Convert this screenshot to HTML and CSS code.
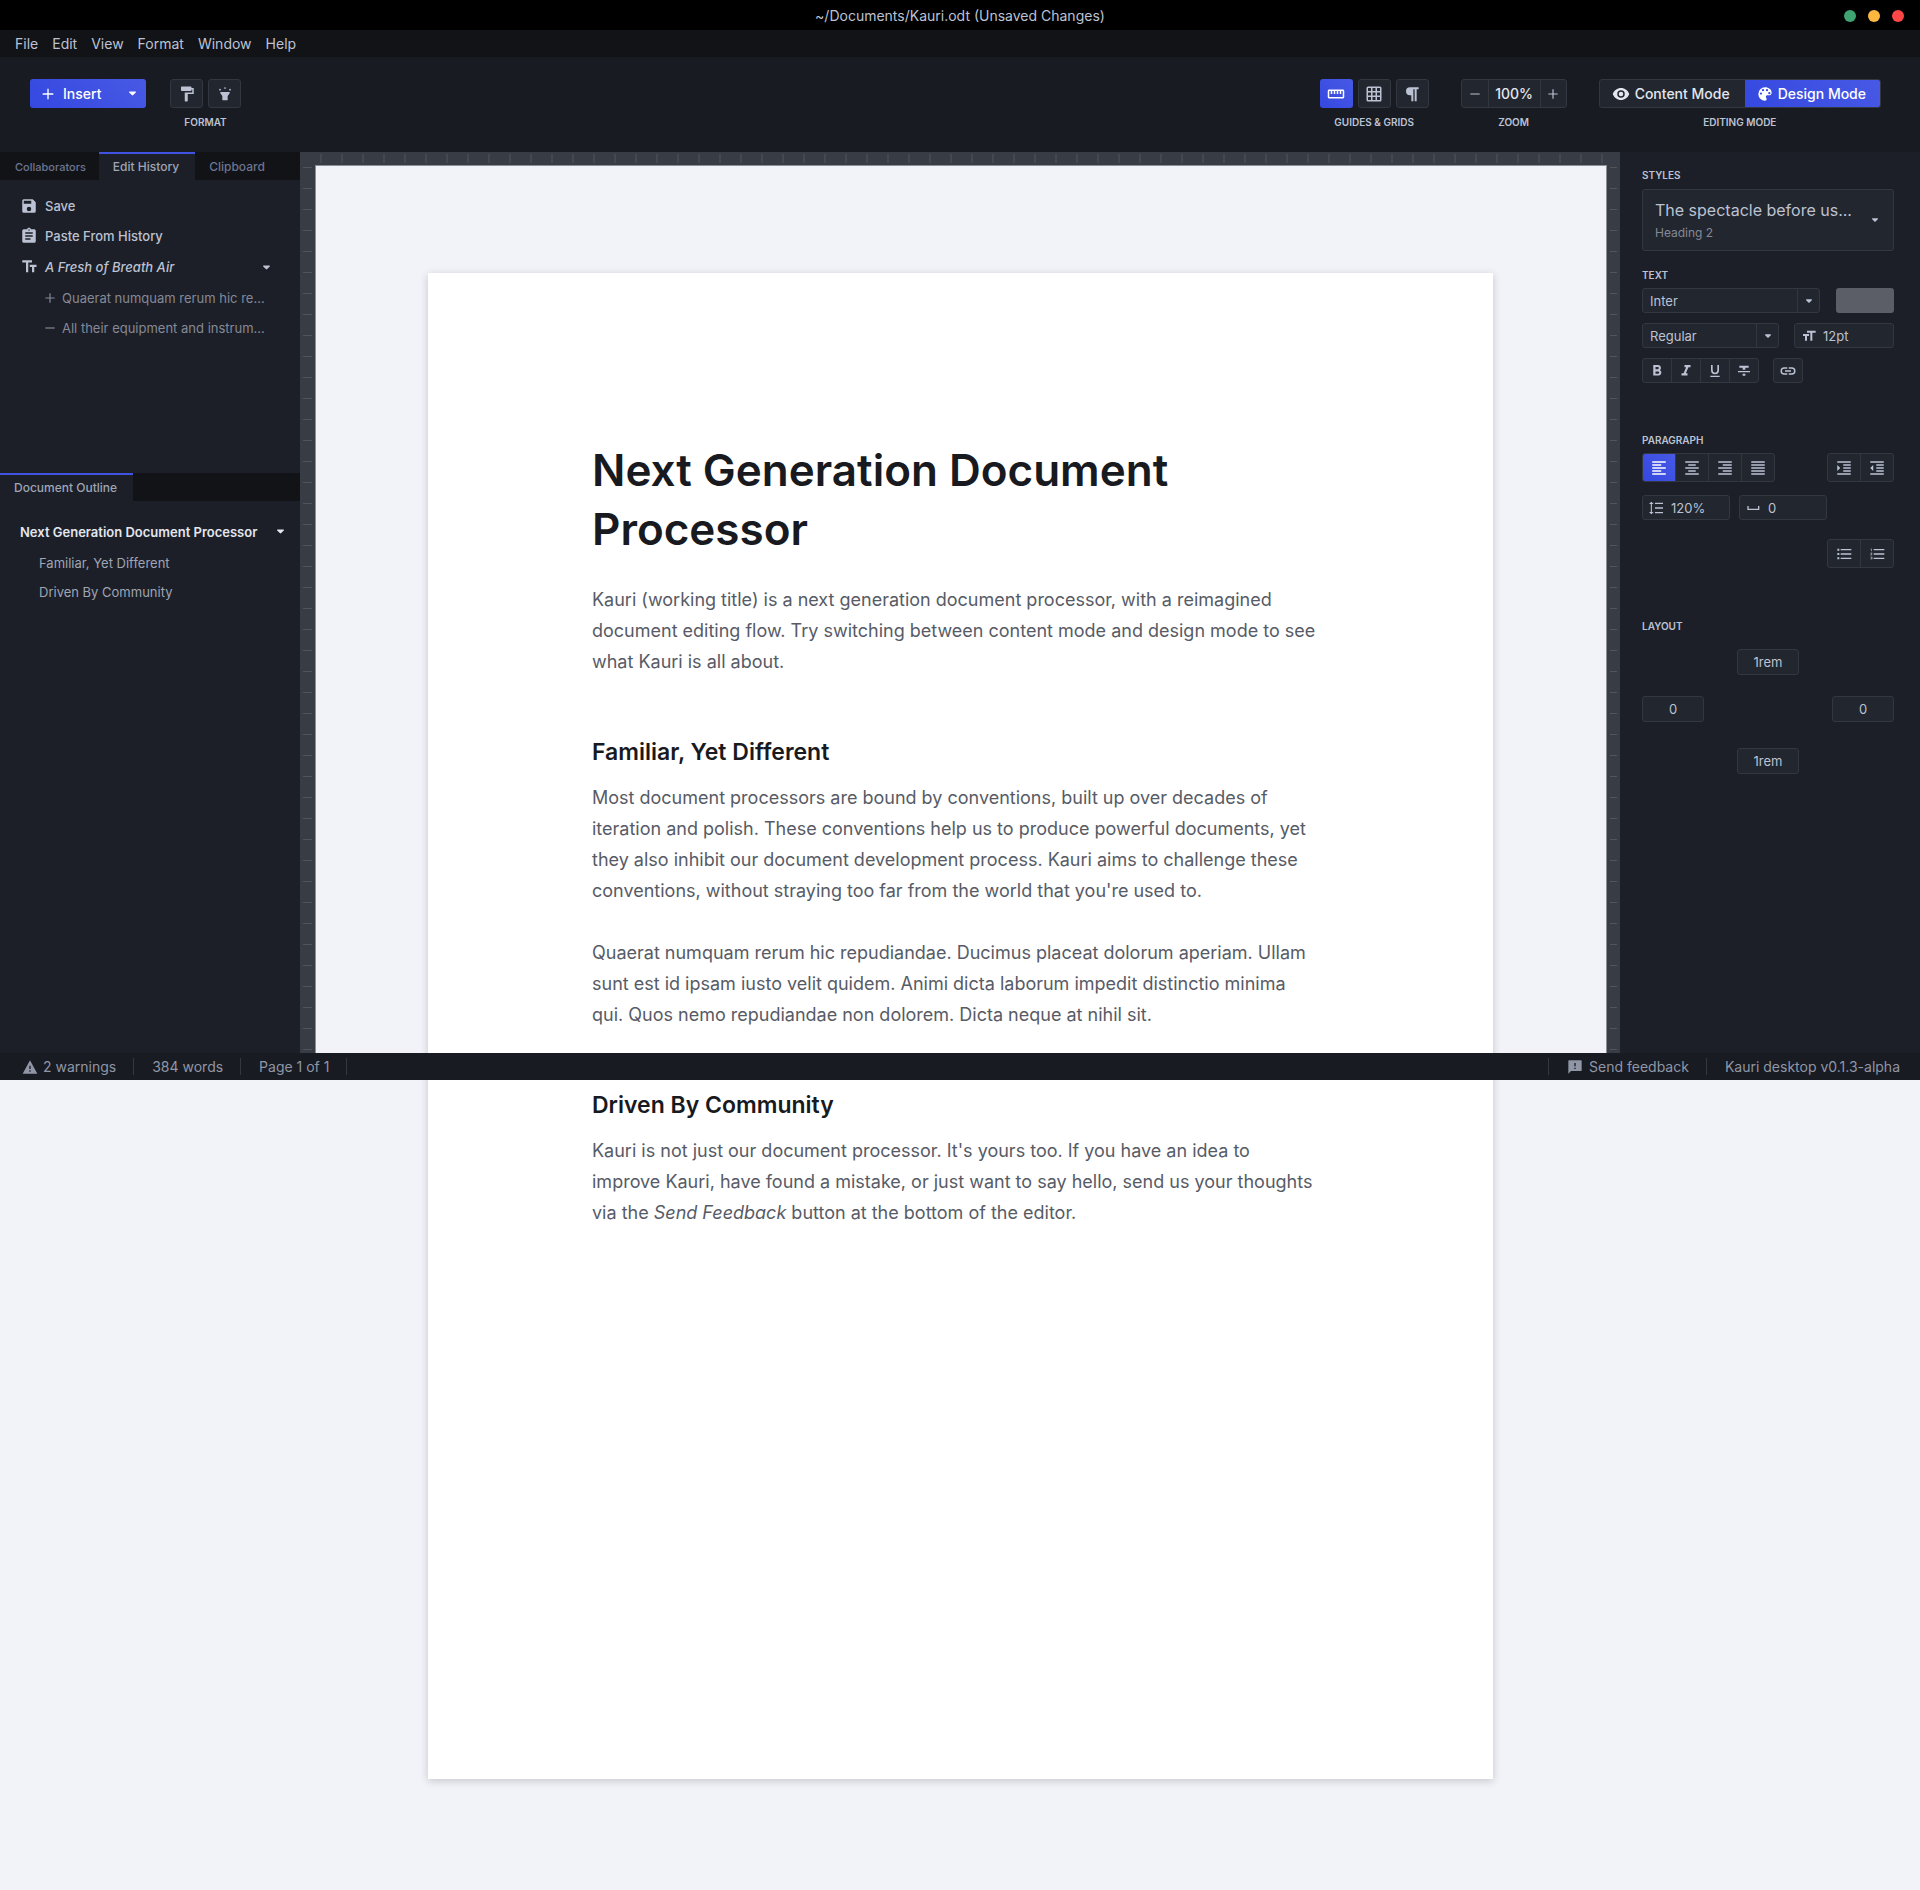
FILE: index.html
```html
<!DOCTYPE html>
<html lang="en">
<head>
<meta charset="utf-8">
<title>Kauri</title>
<link rel="stylesheet" href="styles.css">
</head>
<body>
<svg class="sprite" aria-hidden="true">
  <symbol id="i-plus" viewBox="0 0 24 24"><path d="M20 13h-7v7h-2v-7H4v-2h7V4h2v7h7z"/></symbol>
  <symbol id="i-minus" viewBox="0 0 24 24"><path d="M4 11h16v2H4z"/></symbol>
  <symbol id="i-caret" viewBox="0 0 10 6"><path d="M1 0h8a1 1 0 0 1 .7 1.700L6 5.300a1.400 1.400 0 0 1-2 0L.3 1.700A1 1 0 0 1 1 0z"/></symbol>
  <symbol id="i-roller" viewBox="0 0 24 24"><path d="M18 4V3c0-.55-.45-1-1-1H5c-.55 0-1 .45-1 1v4c0 .55.45 1 1 1h12c.55 0 1-.45 1-1V6h1v4H9v11c0 .55.45 1 1 1h2c.55 0 1-.45 1-1v-9h8V4h-3z"/></symbol>
  <symbol id="i-torch" viewBox="0 0 24 24"><path d="M5 9h14v2l-3 4v5.500a1 1 0 0 1-1 1H9a1 1 0 0 1-1-1V15l-3-4z"/><circle cx="12" cy="3" r="1.300"/><circle cx="4.500" cy="5.500" r="1.300"/><circle cx="19.500" cy="5.500" r="1.300"/></symbol>
  <symbol id="i-ruler" viewBox="0 0 24 24"><path d="M21 6H3c-1.100 0-2 .9-2 2v8c0 1.100.9 2 2 2h18c1.100 0 2-.9 2-2V8c0-1.100-.9-2-2-2zm0 10H3V8h2v4h2V8h2v4h2V8h2v4h2V8h2v4h2V8h2v8z"/></symbol>
  <symbol id="i-grid" viewBox="0 0 24 24"><path d="M20 2H4a2 2 0 0 0-2 2v16a2 2 0 0 0 2 2h16a2 2 0 0 0 2-2V4a2 2 0 0 0-2-2zM8 20H4v-4h4zm0-6H4v-4h4zm0-6H4V4h4zm6 12h-4v-4h4zm0-6h-4v-4h4zm0-6h-4V4h4zm6 12h-4v-4h4zm0-6h-4v-4h4zm0-6h-4V4h4z"/></symbol>
  <symbol id="i-pilcrow" viewBox="0 0 24 24"><path d="M9 2h13v3h-3v18h-3V5h-2v18h-3v-9H9A6 6 0 0 1 9 2z"/></symbol>
  <symbol id="i-eye" viewBox="0 0 24 24"><path d="M12 4C7 4 2.700 7.300 1 12c1.700 4.700 6 8 11 8s9.300-3.300 11-8c-1.700-4.700-6-8-11-8zm0 13a5 5 0 1 1 0-10 5 5 0 0 1 0 10zm0-8a3 3 0 1 0 0 6 3 3 0 0 0 0-6z"/></symbol>
  <symbol id="i-palette" viewBox="0 0 24 24"><path d="M12 2a10 10 0 0 0 0 20c1.500 0 2.500-1.200 2.500-2.500 0-.6-.2-1.200-.6-1.600-.4-.5-.6-1-.6-1.600 0-1.400 1.100-2.300 2.400-2.300H18c2.500 0 4-2 4-4C22 5.500 17.500 2 12 2zM6 13a1.700 1.700 0 1 1 0-3.400A1.700 1.700 0 0 1 6 13zm3-5a1.700 1.700 0 1 1 0-3.400A1.700 1.700 0 0 1 9 8zm6 0a1.700 1.700 0 1 1 0-3.400A1.700 1.700 0 0 1 15 8zm3.500 4.500a1.700 1.700 0 1 1 0-3.400 1.700 1.700 0 0 1 0 3.400z"/></symbol>
  <symbol id="i-save" viewBox="0 0 24 24"><path d="M17 3H5a2 2 0 0 0-2 2v14a2 2 0 0 0 2 2h14a2 2 0 0 0 2-2V7zm-5 16a3 3 0 1 1 0-6 3 3 0 0 1 0 6zm3-10H5V5h10z"/></symbol>
  <symbol id="i-clip" viewBox="0 0 24 24"><path d="M19 3h-4.180C14.400 1.840 13.300 1 12 1s-2.400.84-2.820 2H5a2 2 0 0 0-2 2v14a2 2 0 0 0 2 2h14a2 2 0 0 0 2-2V5a2 2 0 0 0-2-2zm-7 0a1 1 0 1 1 0 2 1 1 0 0 1 0-2zm2 14H7v-2h7zm3-4H7v-2h10zm0-4H7V7h10z"/></symbol>
  <symbol id="i-text" viewBox="0 0 24 24"><path d="M3 3v3h5v13h3V6h5V3zm19 6h-9v3h3v7h3v-7h3z"/></symbol>
  <symbol id="i-size" viewBox="0 0 24 24"><path d="M9 4v3h5v12h3V7h5V4zM3 9v3h3v7h3v-7h3V9z"/></symbol>
  <symbol id="i-bold" viewBox="0 0 24 24"><path d="M15.600 10.790c.97-.67 1.650-1.770 1.650-2.790 0-2.260-1.750-4-4-4H7v14h7.040c2.090 0 3.710-1.700 3.710-3.790 0-1.520-.86-2.820-2.150-3.420zM10 6.500h3a1.500 1.500 0 0 1 0 3h-3zm3.500 9H10v-3h3.500a1.500 1.500 0 0 1 0 3z"/></symbol>
  <symbol id="i-italic" viewBox="0 0 24 24"><path d="M10 4v3h2.210l-3.420 8H6v3h8v-3h-2.210l3.420-8H18V4z"/></symbol>
  <symbol id="i-underline" viewBox="0 0 24 24"><path d="M12 17a6 6 0 0 0 6-6V3h-2.500v8a3.500 3.500 0 0 1-7 0V3H6v8a6 6 0 0 0 6 6zm-7 2v2h14v-2z"/></symbol>
  <symbol id="i-strike" viewBox="0 0 24 24"><path d="M10 19h4v-3h-4zM5 4v3h5v3h4V7h5V4zM3 14h18v-2H3z"/></symbol>
  <symbol id="i-link" viewBox="0 0 24 24"><path d="M3.900 12A3.100 3.100 0 0 1 7 8.900h4V7H7a5 5 0 0 0 0 10h4v-1.900H7A3.100 3.100 0 0 1 3.900 12zM8 13h8v-2H8zm9-6h-4v1.900h4a3.100 3.100 0 0 1 0 6.200h-4V17h4a5 5 0 0 0 0-10z"/></symbol>
  <symbol id="i-left" viewBox="0 0 24 24"><path d="M15 15H3v2h12zm0-8H3v2h12zM3 13h18v-2H3zm0 8h18v-2H3zM3 3v2h18V3z"/></symbol>
  <symbol id="i-center" viewBox="0 0 24 24"><path d="M7 15v2h10v-2zm-4 6h18v-2H3zm0-8h18v-2H3zm4-6v2h10V7zM3 3v2h18V3z"/></symbol>
  <symbol id="i-right" viewBox="0 0 24 24"><path d="M3 21h18v-2H3zm6-4h12v-2H9zm-6-4h18v-2H3zm6-4h12V7H9zM3 3v2h18V3z"/></symbol>
  <symbol id="i-justify" viewBox="0 0 24 24"><path d="M3 21h18v-2H3zm0-4h18v-2H3zm0-4h18v-2H3zm0-4h18V7H3zm0-6v2h18V3z"/></symbol>
  <symbol id="i-indent" viewBox="0 0 24 24"><path d="M3 21h18v-2H3zM3 8v8l4-4zm8 9h10v-2H11zM3 3v2h18V3zm8 6h10V7H11zm0 4h10v-2H11z"/></symbol>
  <symbol id="i-outdent" viewBox="0 0 24 24"><path d="M11 17h10v-2H11zm-8-5 4 4V8zm0 9h18v-2H3zM3 3v2h18V3zm8 6h10V7H11zm0 4h10v-2H11z"/></symbol>
  <symbol id="i-leading" viewBox="0 0 24 24"><path d="M4.300 6H7L3.500 2.500 0 6h2.700v12H0l3.500 3.500L7 18H4.300zM9 4v2h12V4zm0 16h12v-2H9zm0-7h12v-2H9z"/></symbol>
  <symbol id="i-space" viewBox="0 0 24 24"><path d="M18 9v4H4V9H2v6h18V9z"/></symbol>
  <symbol id="i-bullets" viewBox="0 0 24 24"><path d="M2 4h3v3H2zm0 6.500h3v3H2zM2 17h3v3H2zM7 4.500h16v2H7zM7 11h16v2H7zm0 6.500h16v2H7z"/></symbol>
  <symbol id="i-numbers" viewBox="0 0 24 24"><path d="M2 17h2v.5H3v1h1v.5H2v1h3v-4H2zm1-9h1V4H2v1h1zm-1 3h1.800L2 13.100v.9h3v-1H3.200L5 10.900V10H2zm5-6.500v2h16v-2zm0 15h16v-2H7zM7 13h16v-2H7z"/></symbol>
  <symbol id="i-warn" viewBox="0 0 24 24"><path d="M1 22h22L12 2zm12-3h-2v-2h2zm0-4h-2v-5h2z"/></symbol>
  <symbol id="i-feedback" viewBox="0 0 24 24"><path d="M21 2H3a1 1 0 0 0-1 1v19l4-4h15a1 1 0 0 0 1-1V3a1 1 0 0 0-1-1zm-8 13h-2v-2h2zm0-4h-2V6h2z"/></symbol>
</svg>

<div class="app">
  <header class="titlebar">
    <h1 class="window-title">~/Documents/Kauri.odt (Unsaved Changes)</h1>
    <div class="window-controls">
      <button class="dot green" aria-label="Minimise"></button>
      <button class="dot amber" aria-label="Maximise"></button>
      <button class="dot red" aria-label="Close"></button>
    </div>
  </header>

  <nav class="menubar">
    <a href="#">File</a><a href="#">Edit</a><a href="#">View</a><a href="#">Format</a><a href="#">Window</a><a href="#">Help</a>
  </nav>

  <section class="toolbar" aria-label="Toolbar">
    <div class="insert">
      <button class="insert-main"><svg class="icon"><use href="#i-plus"/></svg>Insert</button>
      <button class="insert-more" aria-label="More"><svg class="caret"><use href="#i-caret"/></svg></button>
    </div>
    <div class="tool-group">
      <div class="tools">
        <button class="tool" aria-label="Copy format"><svg class="icon large"><use href="#i-roller"/></svg></button>
        <button class="tool" aria-label="Highlight"><svg class="icon"><use href="#i-torch"/></svg></button>
      </div>
      <span class="caption">FORMAT</span>
    </div>
    <div class="toolbar-right">
      <div class="tool-group">
        <div class="tools">
          <button class="tool active" aria-label="Ruler"><svg class="icon large"><use href="#i-ruler"/></svg></button>
          <button class="tool" aria-label="Grid"><svg class="icon large"><use href="#i-grid"/></svg></button>
          <button class="tool" aria-label="Marks"><svg class="icon"><use href="#i-pilcrow"/></svg></button>
        </div>
        <span class="caption">GUIDES &amp; GRIDS</span>
      </div>
      <div class="tool-group">
        <div class="joined zoom">
          <button aria-label="Zoom out"><svg class="icon small"><use href="#i-minus"/></svg></button>
          <button class="zoom-value">100%</button>
          <button aria-label="Zoom in"><svg class="icon small"><use href="#i-plus"/></svg></button>
        </div>
        <span class="caption">ZOOM</span>
      </div>
      <div class="tool-group">
        <div class="joined modes">
          <button class="mode"><svg class="icon large"><use href="#i-eye"/></svg>Content Mode</button>
          <button class="mode active"><svg class="icon"><use href="#i-palette"/></svg>Design Mode</button>
        </div>
        <span class="caption">EDITING MODE</span>
      </div>
    </div>
  </section>

  <aside class="sidebar">
    <section class="history">
      <div class="tabs">
        <button class="tab minor">Collaborators</button>
        <button class="tab active">Edit History</button>
        <button class="tab">Clipboard</button>
      </div>
      <ul class="history-list">
        <li><svg class="icon large"><use href="#i-save"/></svg>Save</li>
        <li><svg class="icon large"><use href="#i-clip"/></svg>Paste From History</li>
        <li class="expanded"><svg class="icon large"><use href="#i-text"/></svg><em>A Fresh of Breath Air</em><svg class="caret"><use href="#i-caret"/></svg></li>
        <li class="change"><svg class="icon small"><use href="#i-plus"/></svg>Quaerat numquam rerum hic re...</li>
        <li class="change"><svg class="icon small"><use href="#i-minus"/></svg>All their equipment and instrum...</li>
      </ul>
    </section>
    <section class="outline">
      <div class="tabs"><button class="tab active">Document Outline</button></div>
      <ul class="outline-list">
        <li class="outline-top"><a href="#title">Next Generation Document Processor</a><svg class="caret"><use href="#i-caret"/></svg></li>
        <li><a href="#familiar">Familiar, Yet Different</a></li>
        <li><a href="#driven">Driven By Community</a></li>
      </ul>
    </section>
  </aside>

  <div class="frame" aria-hidden="true">
    <div class="ruler-top"></div>
    <div class="ruler-side"></div>
    <div class="canvas"></div>
    <div class="ruler-side"></div>
  </div>

  <main class="document">
    <article class="paper">
      <h1 id="title">Next Generation Document Processor</h1>
      <p>Kauri (working title) is a next generation document processor, with a reimagined document editing flow. Try switching between content mode and design mode to see what Kauri is all about.</p>
      <h2 id="familiar">Familiar, Yet Different</h2>
      <p>Most document processors are bound by conventions, built up over decades of iteration and polish. These conventions help us to produce powerful documents, yet they also inhibit our document development process. Kauri aims to challenge these conventions, without straying too far from the world that you're used to.</p>
      <p>Quaerat numquam rerum hic repudiandae. Ducimus placeat dolorum aperiam. Ullam sunt est id ipsam iusto velit quidem. Animi dicta laborum impedit distinctio minima qui. Quos nemo repudiandae non dolorem. Dicta neque at nihil sit.</p>
      <h2 id="driven">Driven By Community</h2>
      <p>Kauri is not just our document processor. It's yours too. If you have an idea to improve Kauri, have found a mistake, or just want to say hello, send us your thoughts via the <em>Send Feedback</em> button at the bottom of the editor.</p>
    </article>
  </main>

  <aside class="inspector">
    <section class="panel">
      <h2 class="caption">STYLES</h2>
      <button class="style-picker">
        <span class="style-text"><span class="style-sample">The spectacle before us...</span><span class="style-name">Heading 2</span></span>
        <svg class="caret small"><use href="#i-caret"/></svg>
      </button>
    </section>
    <section class="panel text">
      <h2 class="caption">TEXT</h2>
      <div class="fields">
        <div class="row">
          <div class="select family"><select aria-label="Font family"><option>Inter</option></select><svg class="caret small"><use href="#i-caret"/></svg></div>
          <button class="swatch" aria-label="Text colour"></button>
        </div>
        <div class="row">
          <div class="select weight"><select aria-label="Font weight"><option>Regular</option></select><svg class="caret small"><use href="#i-caret"/></svg></div>
          <label class="field size"><svg class="icon"><use href="#i-size"/></svg><input value="12pt" aria-label="Font size"></label>
        </div>
        <div class="row marks">
          <div class="joined short">
            <button aria-label="Bold"><svg class="icon large"><use href="#i-bold"/></svg></button>
            <button aria-label="Italic"><svg class="icon large"><use href="#i-italic"/></svg></button>
            <button aria-label="Underline"><svg class="icon"><use href="#i-underline"/></svg></button>
            <button aria-label="Strikethrough"><svg class="icon"><use href="#i-strike"/></svg></button>
          </div>
          <div class="joined short"><button aria-label="Link"><svg class="icon large"><use href="#i-link"/></svg></button></div>
        </div>
      </div>
    </section>
    <section class="panel paragraph">
      <h2 class="caption">PARAGRAPH</h2>
      <div class="row">
        <div class="joined">
          <button class="active" aria-label="Align left"><svg class="icon large"><use href="#i-left"/></svg></button>
          <button aria-label="Align centre"><svg class="icon large"><use href="#i-center"/></svg></button>
          <button aria-label="Align right"><svg class="icon large"><use href="#i-right"/></svg></button>
          <button aria-label="Justify"><svg class="icon large"><use href="#i-justify"/></svg></button>
        </div>
        <div class="joined">
          <button aria-label="Indent"><svg class="icon large"><use href="#i-indent"/></svg></button>
          <button aria-label="Outdent"><svg class="icon large"><use href="#i-outdent"/></svg></button>
        </div>
      </div>
      <div class="row spacing">
        <label class="field"><svg class="icon"><use href="#i-leading"/></svg><input value="120%" aria-label="Line height"></label>
        <label class="field"><svg class="icon"><use href="#i-space"/></svg><input value="0" aria-label="Spacing"></label>
      </div>
      <div class="row lists">
        <div class="joined">
          <button aria-label="Bullet list"><svg class="icon"><use href="#i-bullets"/></svg></button>
          <button aria-label="Numbered list"><svg class="icon"><use href="#i-numbers"/></svg></button>
        </div>
      </div>
    </section>
    <section class="panel layout">
      <h2 class="caption">LAYOUT</h2>
      <div class="margins">
        <input class="top" value="1rem" aria-label="Top margin">
        <input class="left" value="0" aria-label="Left margin">
        <input class="right" value="0" aria-label="Right margin">
        <input class="bottom" value="1rem" aria-label="Bottom margin">
      </div>
    </section>
  </aside>

  <footer class="statusbar">
    <span class="status"><svg class="icon"><use href="#i-warn"/></svg>2 warnings</span>
    <span class="status">384 words</span>
    <span class="status">Page 1 of 1</span>
    <span class="status-gap"></span>
    <a class="status" href="#"><svg class="icon"><use href="#i-feedback"/></svg>Send feedback</a>
    <span class="status">Kauri desktop v0.1.3-alpha</span>
  </footer>
</div>
</body>
</html>
```
FILE: styles.css
```css
:root {
  --page: #f2f3f8;
  --panel: #1c1f27;
  --bar: #181b22;
  --dark: #121317;
  --control: #22262e;
  --line: #33373f;
  --accent: linear-gradient(45deg, #3548e0, #4759e4);
  --text: #bcc2d3;
  --bright: #e3e6ef;
  --muted: #9096a6;
  --faint: #858997;
}

* { box-sizing: border-box; }

body {
  margin: 0;
  background: var(--page);
  color: var(--text);
  font: 500 14px/20px Inter, sans-serif;
}

button, input, select {
  margin: 0;
  padding: 0;
  border: 0;
  background: none;
  color: inherit;
  font: inherit;
}

a { color: inherit; text-decoration: none; }
ul { margin: 0; padding: 0; list-style: none; }
.sprite { display: none; }
.icon { width: 16px; height: 16px; flex: none; fill: currentColor; }
.icon.large { width: 18px; height: 18px; }
.icon.small { width: 14px; height: 14px; }
.caret { width: 7px; height: 5px; flex: none; fill: currentColor; }
.caret.small { width: 6px; height: 4px; }

/* The document starts beside the panels and runs on behind and below the status bar. */
.app {
  display: grid;
  grid-template-columns: 300px minmax(0, 1fr) 300px;
  grid-template-rows: 30px 27px 95px auto 27px 1fr;
}
.titlebar, .menubar, .toolbar, .statusbar { grid-column: 1 / -1; }
.sidebar { grid-area: 4 / 1; }
.frame { grid-area: 4 / 2; }
.inspector { grid-area: 4 / 3; }
.document { grid-area: 4 / 2 / 7 / 3; z-index: 1; }
.statusbar { grid-row: 5; z-index: 2; }

.titlebar {
  display: grid;
  grid-template-columns: 1fr auto 1fr;
  align-items: center;
  padding: 2px 16px 0;
  background: #000;
  font-weight: 400;
}
.window-title { grid-column: 2; margin: 0; font: inherit; }
.window-controls { display: flex; justify-content: flex-end; gap: 12px; }
.dot { width: 12px; height: 12px; border-radius: 50%; }
.green { background: #3fa372; }
.amber { background: #ffb83f; }
.red { background: #ff4747; }

.menubar {
  display: flex;
  align-items: center;
  gap: 14px;
  padding: 0 15px;
  background: var(--dark);
  font-weight: 400;
}

.toolbar {
  display: flex;
  align-items: flex-start;
  gap: 24px;
  padding: 22px 39px 0 30px;
  background: var(--bar);
}
.toolbar-right { display: flex; gap: 32px; margin-left: auto; }
.tool-group { display: flex; flex-direction: column; align-items: center; gap: 4px; }
.tools { display: flex; gap: 5px; }
.caption {
  margin: 0;
  font-size: 10px;
  font-weight: 600;
  line-height: 20px;
}
.tool {
  display: flex;
  align-items: center;
  justify-content: center;
  width: 33px;
  height: 29px;
  border: 1px solid var(--line);
  border-radius: 3px;
  background: var(--control);
}
.tool.active { border: 0; }
button.active { background: var(--accent); color: #fff; }
.insert {
  display: flex;
  height: 29px;
  border-radius: 3px;
  background: var(--accent);
  color: #fff;
}
.insert-main { display: flex; align-items: center; gap: 7px; width: 88px; padding-left: 10px; }
.insert-more { display: flex; align-items: center; justify-content: center; width: 28px; }

.joined {
  display: flex;
  height: 29px;
  overflow: hidden;
  border: 1px solid var(--line);
  border-radius: 3px;
  background: var(--control);
}
.joined button { display: flex; align-items: center; justify-content: center; width: 33px; }
.joined button:first-child { width: 32px; }
.joined button + button { border-left: 1px solid var(--line); }
.joined.short { height: 25px; }
.joined.short button { width: 29px; }
.joined.short button:first-child { width: 28px; }
.joined.zoom button { width: 26px; }
.joined.zoom .zoom-value { width: 52px; color: var(--bright); }
.joined.modes button { width: auto; gap: 5px; padding: 0 15px 0 12px; color: var(--bright); }
.joined.modes .active { padding: 0 14px 0 12px; border: 0; color: #fff; }

.sidebar { background: var(--panel); }
.tabs { display: flex; height: 28px; background: var(--dark); color: #6d7590; }
.tabs .tab { padding: 0 16px 0 14px; border-top: 2px solid transparent; font-size: 12px; line-height: 26px; }
.tabs .minor { padding: 0 13px 0 15px; font-size: 11px; }
.tabs .active { border-color: #4053e2; background: var(--panel); color: #9fa5b5; }
.history { min-height: 321px; }
.history-list { padding: 11px 30px 0 20px; font-size: 13px; }
.history-list li { display: flex; align-items: center; gap: 7px; height: 30px; }
.history-list .expanded { height: 32px; }
.history-list .caret { margin-left: auto; }
.history-list .change { gap: 5px; padding-left: 23px; color: var(--faint); font-weight: 400; }
.outline { min-height: 580px; }
.outline-list { padding: 14px 16px 0 20px; font-size: 13px; color: #9fa5b5; }
.outline-list li { height: 29px; padding: 5px 0 0 19px; line-height: 20px; font-weight: 400; }
.outline-list .outline-top {
  display: flex;
  align-items: center;
  justify-content: space-between;
  height: 33px;
  padding: 0;
  color: var(--bright);
  font-weight: 600;
}

.frame {
  display: grid;
  grid-template: 13px 1fr / 15px 1fr 13px;
  background: #383c44;
}
.ruler-top {
  grid-column: 1 / -1;
  margin: 2px 15px 2px 20px;
  background: repeating-linear-gradient(90deg, #444850 0 2px, transparent 2px 21px);
}
.ruler-side {
  margin: 2px 3px 0;
  background: repeating-linear-gradient(#50545c 0 1px, transparent 1px 21px);
}
.canvas {
  border: solid #8c8f96;
  border-width: 1px 1px 0;
  background: var(--page);
}

.document { padding: 121px 127px 111px 128px; }
.paper {
  min-height: 1506px;
  padding: 168px 174px 164px 164px;
  background: #fff;
  box-shadow: 0 2px 8px rgba(20, 24, 40, .2);
  color: #575b66;
  font-size: 18px;
  font-weight: 400;
  line-height: 31px;
}
.paper h1 { margin: 0 0 25px; color: #181a20; font-size: 44px; font-weight: 600; line-height: 59px; }
.paper h2 { margin: 59px 0 14px; color: #181a20; font-size: 23px; font-weight: 600; line-height: 32px; }
.paper p { margin: 0 0 31px; }

.inspector { padding: 13px 26px 0 22px; background: var(--panel); }
.row { display: flex; justify-content: space-between; }
.style-picker {
  display: flex;
  align-items: center;
  justify-content: space-between;
  width: 100%;
  height: 62px;
  margin-top: 4px;
  padding: 0 15px 0 12px;
  border: 1px solid var(--line);
  border-radius: 3px;
  background: var(--control);
  text-align: left;
}
.style-text { display: flex; flex-direction: column; gap: 1px; font-weight: 400; }
.style-sample { font-size: 16px; line-height: 24px; }
.style-name { color: var(--faint); font-size: 12px; }
.panel.text { margin-top: 14px; }
.fields { display: flex; flex-direction: column; gap: 10px; margin-top: 3px; }
.row.marks { justify-content: flex-start; gap: 14px; }
.select, .field {
  display: flex;
  align-items: center;
  height: 25px;
  border: 1px solid var(--line);
  border-radius: 3px;
  background: var(--control);
  font-size: 13px;
  font-weight: 400;
}
.select select { flex: 1; align-self: stretch; min-width: 0; padding-left: 7px; border-right: 1px solid var(--line); appearance: none; }
.select .caret { margin: 0 7px 0 8px; }
.family { width: 178px; }
.weight { width: 137px; }
.swatch { width: 58px; height: 25px; border-radius: 3px; background: #5b5e66; }
.field { gap: 6px; width: 88px; padding: 0 6px; }
.field.size { width: 100px; }
.field input { flex: 1; width: 0; }
.panel.paragraph { margin-top: 47px; }
.paragraph .row { margin-top: 3px; }
.paragraph .row.spacing { justify-content: flex-start; gap: 9px; margin-top: 13px; }
.paragraph .row.lists { justify-content: flex-end; margin-top: 19px; }
.panel.layout { margin-top: 48px; }
.margins {
  display: grid;
  grid-template: ". top ." 26px "left . right" 26px ". bottom ." 31px / 62px 62px 62px;
  justify-content: space-between;
  row-gap: 21px;
  margin-top: 13px;
}
.margins input {
  height: 26px;
  border: 1px solid var(--line);
  border-radius: 3px;
  background: var(--control);
  font-size: 13px;
  font-weight: 400;
  text-align: center;
}
.top { grid-area: top; }
.left { grid-area: left; }
.right { grid-area: right; }
.bottom { grid-area: bottom; align-self: end; }

.statusbar {
  display: flex;
  align-items: center;
  padding: 0 3px 0 4px;
  background: var(--bar);
  color: var(--muted);
  font-weight: 400;
}
.status { display: flex; align-items: center; gap: 6px; height: 17px; padding: 0 17px 0 18px; border-left: 1px solid var(--line); }
.status:first-child { gap: 5px; border-left: 0; }
.status-gap { flex: 1; height: 17px; border-left: 1px solid var(--line); }
```
